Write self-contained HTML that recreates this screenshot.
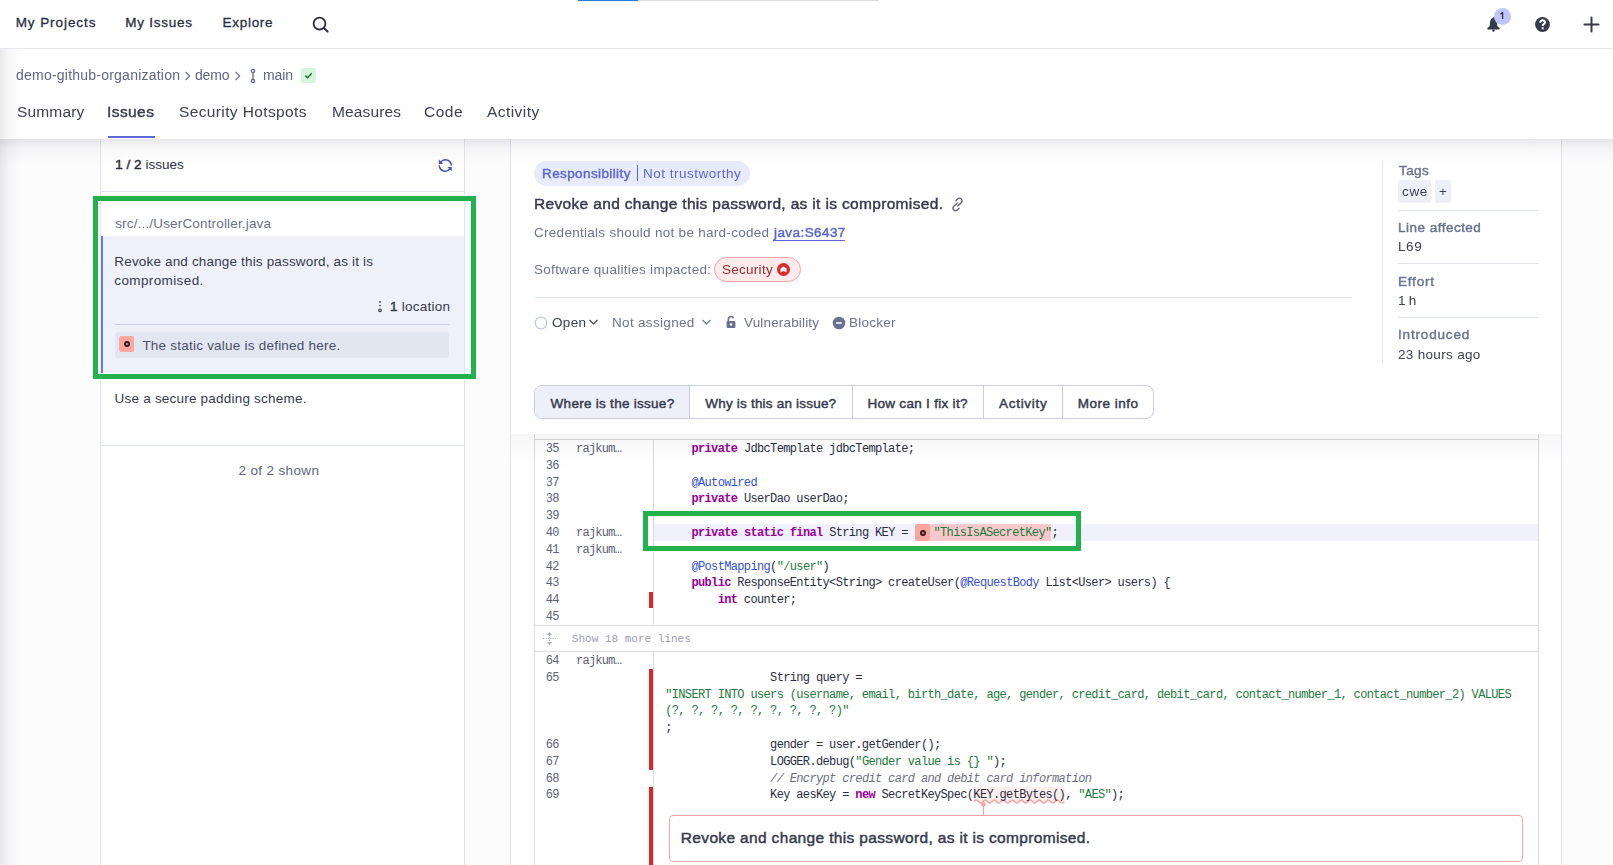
<!DOCTYPE html><html><head><meta charset="utf-8"><style>

*{box-sizing:border-box;margin:0;padding:0}
html,body{width:1613px;height:865px;overflow:hidden;background:#fcfcfd;font-family:'Liberation Sans', sans-serif}
.a{position:absolute;white-space:pre}
.r{position:absolute}
.cl{position:absolute;white-space:pre;font-family:'Liberation Mono', monospace;font-size:12px;line-height:12px;letter-spacing:-0.645px;color:#2a2e3f}
.ln{left:530px;width:28.86px;text-align:right;color:#5b6277}
.au{left:576px;color:#5b6277;letter-spacing:-0.745px}
.cd{left:665.2px}
b{font-weight:400;-webkit-text-stroke-width:0.45px}
.cl b{font-weight:700;-webkit-text-stroke-width:0}

</style></head><body>

<!-- top bar -->
<div class="r" style="left:0;top:0;width:1613px;height:49px;background:#fff;border-bottom:1px solid #e8e9ee"></div>
<div class="r" style="left:578px;top:0;width:60px;height:1px;background:#2f7ad8"></div>
<div class="r" style="left:638px;top:0;width:241px;height:1px;background:#dcdcdc"></div>
<svg class="r" style="left:311px;top:15px" width="20" height="20" viewBox="0 0 20 20"><circle cx="8.5" cy="8.6" r="5.9" fill="none" stroke="#2a2e3f" stroke-width="1.8"/><path d="M12.8 13 L16.6 16.6" stroke="#2a2e3f" stroke-width="2" stroke-linecap="round"/></svg>
<!-- bell -->
<svg class="r" style="left:1486px;top:16px" width="16" height="17" viewBox="0 0 16 17"><path d="M7.5 1.2 C5.3 1.9 4.2 3.9 4 6.6 L3.6 10.2 L1.4 12 Q0.9 13.5 2.3 13.5 H12.7 Q14.1 13.5 13.6 12 L11.4 10.2 L11 6.6 C10.8 3.9 9.7 1.9 7.5 1.2 Z" fill="#363a4b"/><path d="M6.1 13.6 H8.9 L8.3 15.7 H6.7 Z" fill="#363a4b"/></svg>
<div class="r" style="left:1494px;top:8px;width:17px;height:17px;border-radius:50%;background:#c0c6fb"></div>
<svg class="r" style="left:1494px;top:8px" width="17" height="17" viewBox="0 0 17 17"><path d="M6.3 6.2 L8.6 4.4 V11" fill="none" stroke="#3a2e3a" stroke-width="1.3" stroke-linejoin="round"/></svg>
<!-- help -->
<svg class="r" style="left:1535px;top:17px" width="15" height="15" viewBox="0 0 15 15"><circle cx="7.5" cy="7.5" r="7.4" fill="#363a4b"/><path d="M5.2 5.7 C5.2 4.1 6.2 3.3 7.6 3.3 C9 3.3 9.9 4.2 9.9 5.4 C9.9 7 7.7 7.1 7.7 9" fill="none" stroke="#fff" stroke-width="2" stroke-linecap="butt"/><rect x="6.7" y="10.3" width="2" height="1.9" fill="#fff"/></svg>
<!-- plus -->
<svg class="r" style="left:1583px;top:16px" width="17" height="17" viewBox="0 0 17 17"><path d="M8.5 1.5 V15.5 M1.5 8.5 H15.5" stroke="#363a4b" stroke-width="2" stroke-linecap="round"/></svg>

<!-- sub header shadow + body -->
<div class="r" style="left:0;top:49px;width:1613px;height:90px;background:#fff;z-index:5"></div>
<div class="r" style="left:0;top:139px;width:1613px;height:26px;background:linear-gradient(rgba(20,20,40,0.095),rgba(20,20,40,0.03) 40%,rgba(20,20,40,0));z-index:5"></div>


<div class="r" style="left:108px;top:136px;width:47px;height:2px;background:#5f6bd3;z-index:6"></div>
<svg class="r" style="left:183px;top:70px;z-index:6" width="10" height="12" viewBox="0 0 10 12"><path d="M2.5 1.8 L6.6 6 L2.5 10.2" fill="none" stroke="#5c6788" stroke-width="1.1"/></svg>
<svg class="r" style="left:232.5px;top:70px;z-index:6" width="10" height="12" viewBox="0 0 10 12"><path d="M2.5 1.8 L6.6 6 L2.5 10.2" fill="none" stroke="#5c6788" stroke-width="1.1"/></svg>
<svg class="r" style="left:249px;top:68px;z-index:6" width="8" height="16" viewBox="0 0 8 16"><circle cx="4" cy="3" r="1.6" fill="none" stroke="#5c6788" stroke-width="1.3"/><circle cx="4" cy="13" r="1.6" fill="none" stroke="#5c6788" stroke-width="1.3"/><path d="M4 4.6 V11.4" stroke="#5c6788" stroke-width="1.3"/></svg>
<div class="r" style="left:301px;top:68px;width:15px;height:15px;border-radius:2px;background:#d4f5dc;z-index:6"></div>
<svg class="r" style="left:301px;top:68px;z-index:6" width="15" height="15" viewBox="0 0 15 15"><path d="M4.3 7.6 L6.5 9.7 L10.7 5.3" fill="none" stroke="#1f6e38" stroke-width="1.5"/></svg>


<div class="r" style="left:100px;top:139px;width:365px;height:726px;background:#fff;border-left:1px solid #e1e5f0;border-right:1px solid #e1e5f0"></div>
<div class="r" style="left:101px;top:191px;width:363px;height:1px;background:#e1e5f0"></div>
<svg class="r" style="left:438px;top:158px" width="16" height="16" viewBox="0 0 16 16"><path d="M2.6 4.4 A5.9 5.9 0 0 1 13.3 7" fill="none" stroke="#4450c0" stroke-width="1.5" stroke-linecap="round"/><path d="M0.9 1.6 L0.9 6 L5.2 6Z" fill="#4450c0"/><path d="M1.3 7.9 A5.9 5.9 0 0 0 12 10.6" fill="none" stroke="#4450c0" stroke-width="1.5" stroke-linecap="round"/><path d="M13.7 8.9 L13.7 13.2 L9.4 8.9Z" fill="#4450c0"/></svg>
<div class="r" style="left:101px;top:236px;width:363px;height:137px;background:#eef1f9"></div>
<div class="r" style="left:101px;top:236px;width:2px;height:137px;background:#6f7bd8"></div>
<svg class="r" style="left:376.6px;top:300px" width="6" height="13" viewBox="0 0 6 13"><circle cx="3" cy="1.9" r="0.95" fill="#363b4d"/><circle cx="3" cy="5.6" r="0.85" fill="#363b4d"/><circle cx="3" cy="10.3" r="1.35" fill="none" stroke="#363b4d" stroke-width="1.15"/></svg>
<div class="r" style="left:115px;top:324px;width:334px;height:1px;background:#c9cfe2"></div>
<div class="r" style="left:115px;top:332px;width:334px;height:26px;border-radius:3px;background:#e1e6f1"></div>
<div class="r" style="left:119px;top:336px;width:15px;height:16px;border-radius:2px;background:#fca8a1"></div>
<div class="r" style="left:123.5px;top:341px;width:6px;height:6px;border-radius:50%;border:2px solid #3a1a1a;background:#f6a09a"></div>
<div class="r" style="left:101px;top:445px;width:363px;height:1px;background:#e1e5f0"></div>


<div class="r" style="left:510px;top:139px;width:1052px;height:726px;background:#fff;border-left:1px solid #e1e5f0;border-right:1px solid #e1e5f0"></div>
<div class="r" style="left:534px;top:161px;width:216px;height:25px;border-radius:13px;background:#e8ebfc"></div>
<div class="r" style="left:637px;top:165px;width:1px;height:16px;background:#5b67d6"></div>
<svg class="r" style="left:949.5px;top:197px" width="15" height="15" viewBox="0 0 15 15"><g transform="rotate(-45 7.5 7.5)" fill="none" stroke="#5c6788" stroke-width="1.35" stroke-linecap="round"><path d="M8.4 6.2 H3.6 A2.55 2.55 0 0 0 3.6 11.3 H6"/><path d="M6.6 8.8 H11.4 A2.55 2.55 0 0 0 11.4 3.7 H9"/></g></svg>
<div class="r" style="left:773px;top:239.5px;width:72px;height:1px;background:#5b67d6"></div>
<div class="r" style="left:714px;top:257px;width:87px;height:25px;border-radius:13px;background:#fdeaea;border:1px solid #f5a5a5"></div>
<svg class="r" style="left:777px;top:263px" width="13" height="13" viewBox="0 0 13 13"><circle cx="6.5" cy="6.5" r="6.5" fill="#d92b2b"/><path d="M3.7 5.4 L6.5 3.7 L9.3 5.4 V9.1 L6.5 8 L3.7 9.1 Z" fill="#fff" stroke="#fff" stroke-width="0.3" stroke-linejoin="round"/></svg>
<div class="r" style="left:534px;top:297px;width:818px;height:1px;background:#e1e6f3"></div>
<svg class="r" style="left:534px;top:316px" width="14" height="14" viewBox="0 0 14 14"><circle cx="7" cy="7" r="5.8" fill="none" stroke="#c3c9dd" stroke-width="1.3"/></svg>
<svg class="r" style="left:588px;top:318px" width="11" height="8" viewBox="0 0 11 8"><path d="M1.5 2 L5.5 6 L9.5 2" fill="none" stroke="#3b4054" stroke-width="1.2"/></svg>
<svg class="r" style="left:701px;top:318px" width="11" height="8" viewBox="0 0 11 8"><path d="M1.5 2 L5.5 6 L9.5 2" fill="none" stroke="#6b7390" stroke-width="1.2"/></svg>
<svg class="r" style="left:725px;top:315px" width="12" height="14" viewBox="0 0 12 14"><path d="M3.4 6 V4.2 A2.7 2.7 0 0 1 8.6 3.2" fill="none" stroke="#68718f" stroke-width="1.7"/><rect x="1.6" y="6" width="8.8" height="7" rx="1" fill="#68718f"/><circle cx="6" cy="9.5" r="1.2" fill="#fff"/></svg>
<svg class="r" style="left:831.5px;top:315.5px" width="14" height="14" viewBox="0 0 14 14"><circle cx="7" cy="7" r="6.3" fill="#68718f"/><rect x="4" y="6.2" width="6" height="1.6" rx="0.5" fill="#fff"/></svg>
<!-- sidebar -->
<div class="r" style="left:1382px;top:161px;width:1px;height:202px;background:#e1e5f0"></div>
<div class="r" style="left:1398px;top:180px;width:33px;height:23px;border-radius:2px;background:#eef0f8"></div>
<div class="r" style="left:1435px;top:180px;width:16px;height:23px;border-radius:2px;background:#eef0f8"></div>
<div class="r" style="left:1398px;top:210px;width:141px;height:1px;background:#e1e5f0"></div>
<div class="r" style="left:1398px;top:263px;width:141px;height:1px;background:#e1e5f0"></div>
<div class="r" style="left:1398px;top:317px;width:141px;height:1px;background:#e1e5f0"></div>
<!-- tabs -->
<div class="r" style="left:534px;top:385px;width:620px;height:34px;border-radius:8px;border:1px solid #c8cde0;overflow:hidden">
  <div class="r" style="left:0;top:0;width:154px;height:32px;background:#eef0f9"></div>
  <div class="r" style="left:154px;top:0;width:1px;height:32px;background:#c8cde0"></div>
  <div class="r" style="left:317px;top:0;width:1px;height:32px;background:#c8cde0"></div>
  <div class="r" style="left:448px;top:0;width:1px;height:32px;background:#c8cde0"></div>
  <div class="r" style="left:527px;top:0;width:1px;height:32px;background:#c8cde0"></div>
</div>
<!-- header shadow -->



<div class="r" style="left:534px;top:434px;width:1005px;height:431px;border:1px solid #dcdcdc;border-top:none;border-bottom:none;background:#fff"></div>

<div class="r" style="left:535px;top:439px;width:1003px;height:1px;background:#dcdcdc"></div>
<div class="r" style="left:653px;top:440px;width:1px;height:185px;background:#dcdcdc"></div>
<div class="r" style="left:653px;top:652px;width:1px;height:213px;background:#dcdcdc"></div>
<div class="r" style="left:654px;top:524px;width:884px;height:17px;background:#f0f1fc"></div>
<div class="r" style="left:535px;top:625px;width:1003px;height:1px;background:#dcdcdc"></div>
<div class="r" style="left:535px;top:651px;width:1003px;height:1px;background:#dcdcdc"></div>
<svg class="r" style="left:542px;top:631px" width="15" height="15" viewBox="0 0 15 15"><path d="M7.5 1 L5 4 H10Z M7.5 14 L5 11 H10Z" fill="#a5aab9"/><path d="M1 7.5 H14" stroke="#a5aab9" stroke-width="1" stroke-dasharray="1.2 1.2"/><path d="M7.5 4 V11" stroke="#a5aab9" stroke-width="1" stroke-dasharray="1.2 1.2"/></svg>
<div class="r" style="left:649px;top:592px;width:4px;height:16px;background:#d42a2a"></div>
<div class="r" style="left:649px;top:669px;width:4px;height:101px;background:#d42a2a"></div>
<div class="r" style="left:649px;top:786.5px;width:4px;height:80px;background:#d42a2a"></div>
<div class="r" style="left:915px;top:524px;width:15px;height:17px;border-radius:2px;background:#f9a59f"></div>
<div class="r" style="left:919.5px;top:529.5px;width:6px;height:6px;border-radius:50%;border:2px solid #3a1a1a;background:#f6a09a"></div>
<div class="r" style="left:930px;top:524px;width:121px;height:17px;background:#f8c9cc"></div>
<div class="r" style="left:974px;top:787px;width:91px;height:15px;background:#fdeeee"></div>
<svg class="r" style="left:973px;top:798px" width="93" height="19" viewBox="0 0 93 19"><path d="M1 3.5 Q3.25 0.5 5.50 3.5 Q7.75 6.5 10.00 3.5 Q12.25 0.5 14.50 3.5 Q16.75 6.5 19.00 3.5 Q21.25 0.5 23.50 3.5 Q25.75 6.5 28.00 3.5 Q30.25 0.5 32.50 3.5 Q34.75 6.5 37.00 3.5 Q39.25 0.5 41.50 3.5 Q43.75 6.5 46.00 3.5 Q48.25 0.5 50.50 3.5 Q52.75 6.5 55.00 3.5 Q57.25 0.5 59.50 3.5 Q61.75 6.5 64.00 3.5 Q66.25 0.5 68.50 3.5 Q70.75 6.5 73.00 3.5 Q75.25 0.5 77.50 3.5 Q79.75 6.5 82.00 3.5 Q84.25 0.5 86.50 3.5 Q88.75 6.5 91.00 3.5" fill="none" stroke="#f6a3a0" stroke-width="1.6"/><circle cx="10.5" cy="6.5" r="2.2" fill="#f6a3a0"/><path d="M10.5 6.5 V18" stroke="#f6a3a0" stroke-width="1.2"/></svg>
<div class="r" style="left:669px;top:815px;width:854px;height:47px;border-radius:4px;border:1px solid #f4a5a5;background:#fff"></div>

<div class="a" style="left:15.70px;top:16.00px;line-height:13.5px;color:#2a2e3f;font-family:'Liberation Sans', sans-serif;font-size:13.5px;font-weight:400;-webkit-text-stroke-width:0.3px;letter-spacing:0.92px;">My Projects</div>
<div class="a" style="left:125.20px;top:16.00px;line-height:13.5px;color:#2a2e3f;font-family:'Liberation Sans', sans-serif;font-size:13.5px;font-weight:400;-webkit-text-stroke-width:0.3px;letter-spacing:0.75px;">My Issues</div>
<div class="a" style="left:222.60px;top:16.00px;line-height:13.5px;color:#2a2e3f;font-family:'Liberation Sans', sans-serif;font-size:13.5px;font-weight:400;-webkit-text-stroke-width:0.3px;letter-spacing:0.7px;">Explore</div>
<div class="a" style="z-index:6;left:15.80px;top:68.00px;line-height:14px;color:#5c6788;will-change:transform;font-family:'Liberation Sans', sans-serif;font-size:14px;font-weight:400;letter-spacing:0.226px;">demo-github-organization</div>
<div class="a" style="z-index:6;left:194.50px;top:68.00px;line-height:14px;color:#5c6788;will-change:transform;font-family:'Liberation Sans', sans-serif;font-size:14px;font-weight:400;letter-spacing:-0.167px;">demo</div>
<div class="a" style="z-index:6;left:263.00px;top:68.00px;line-height:14px;color:#5c6788;will-change:transform;font-family:'Liberation Sans', sans-serif;font-size:14px;font-weight:400;letter-spacing:-0.133px;">main</div>
<div class="a" style="z-index:6;left:17.00px;top:103.80px;line-height:15.5px;color:#3b4054;will-change:transform;font-family:'Liberation Sans', sans-serif;font-size:15.5px;font-weight:400;letter-spacing:0.167px;">Summary</div>
<div class="a" style="z-index:6;left:107.40px;top:103.80px;line-height:15.5px;color:#3b4054;will-change:transform;font-family:'Liberation Sans', sans-serif;font-size:15.5px;font-weight:400;-webkit-text-stroke-width:0.45px;letter-spacing:0.42px;">Issues</div>
<div class="a" style="z-index:6;left:179.00px;top:103.80px;line-height:15.5px;color:#3b4054;will-change:transform;font-family:'Liberation Sans', sans-serif;font-size:15.5px;font-weight:400;letter-spacing:0.375px;">Security Hotspots</div>
<div class="a" style="z-index:6;left:331.50px;top:103.80px;line-height:15.5px;color:#3b4054;will-change:transform;font-family:'Liberation Sans', sans-serif;font-size:15.5px;font-weight:400;letter-spacing:0.143px;">Measures</div>
<div class="a" style="z-index:6;left:424.00px;top:103.80px;line-height:15.5px;color:#3b4054;will-change:transform;font-family:'Liberation Sans', sans-serif;font-size:15.5px;font-weight:400;letter-spacing:0.5px;">Code</div>
<div class="a" style="z-index:6;left:487.40px;top:103.80px;line-height:15.5px;color:#3b4054;will-change:transform;font-family:'Liberation Sans', sans-serif;font-size:15.5px;font-weight:400;letter-spacing:0.443px;">Activity</div>
<div class="a" style="left:115.20px;top:158.20px;line-height:13.5px;color:#2a2e3f;font-family:'Liberation Sans', sans-serif;font-size:13.5px;font-weight:400;letter-spacing:0.036px;"><b>1 / 2</b> issues</div>
<div class="a" style="left:115.20px;top:216.60px;line-height:13.5px;color:#69708a;font-family:'Liberation Sans', sans-serif;font-size:13.5px;font-weight:400;letter-spacing:0.165px;">src/.../UserController.java</div>
<div class="a" style="left:114.30px;top:254.80px;line-height:13.5px;color:#363b4d;font-family:'Liberation Sans', sans-serif;font-size:13.5px;font-weight:400;letter-spacing:0.163px;">Revoke and change this password, as it is</div>
<div class="a" style="left:114.30px;top:273.50px;line-height:13.5px;color:#363b4d;font-family:'Liberation Sans', sans-serif;font-size:13.5px;font-weight:400;letter-spacing:0.382px;">compromised.</div>
<div class="a" style="left:389.90px;top:300.10px;line-height:13.5px;color:#363b4d;font-family:'Liberation Sans', sans-serif;font-size:13.5px;font-weight:400;letter-spacing:0.256px;"><b>1</b> location</div>
<div class="a" style="left:142.40px;top:339.00px;line-height:13.5px;color:#4a5068;font-family:'Liberation Sans', sans-serif;font-size:13.5px;font-weight:400;letter-spacing:0.225px;">The static value is defined here.</div>
<div class="a" style="left:114.60px;top:391.90px;line-height:13.5px;color:#363b4d;font-family:'Liberation Sans', sans-serif;font-size:13.5px;font-weight:400;letter-spacing:0.211px;">Use a secure padding scheme.</div>
<div class="a" style="left:238.50px;top:463.70px;line-height:13.5px;color:#5e6580;font-family:'Liberation Sans', sans-serif;font-size:13.5px;font-weight:400;letter-spacing:0.355px;">2 of 2 shown</div>
<div class="a" style="left:541.70px;top:167.20px;line-height:13.5px;color:#5b67d6;will-change:transform;font-family:'Liberation Sans', sans-serif;font-size:13.5px;font-weight:400;-webkit-text-stroke-width:0.45px;letter-spacing:0.392px;">Responsibility</div>
<div class="a" style="left:642.70px;top:167.20px;line-height:13.5px;color:#5b67d6;will-change:transform;font-family:'Liberation Sans', sans-serif;font-size:13.5px;font-weight:400;letter-spacing:0.507px;">Not trustworthy</div>
<div class="a" style="left:533.60px;top:195.70px;line-height:15.5px;color:#363a4d;will-change:transform;font-family:'Liberation Sans', sans-serif;font-size:15.5px;font-weight:400;-webkit-text-stroke-width:0.45px;letter-spacing:0.336px;">Revoke and change this password, as it is compromised.</div>
<div class="a" style="left:533.60px;top:226.10px;line-height:13.5px;color:#6b7390;will-change:transform;font-family:'Liberation Sans', sans-serif;font-size:13.5px;font-weight:400;letter-spacing:0.283px;">Credentials should not be hard-coded</div>
<div class="a" style="left:774.00px;top:226.10px;line-height:13.5px;color:#5b67d6;will-change:transform;font-family:'Liberation Sans', sans-serif;font-size:13.5px;font-weight:400;-webkit-text-stroke-width:0.45px;letter-spacing:0.422px;">java:S6437</div>
<div class="a" style="left:533.50px;top:262.80px;line-height:13.5px;color:#6b7390;will-change:transform;font-family:'Liberation Sans', sans-serif;font-size:13.5px;font-weight:400;letter-spacing:0.304px;">Software qualities impacted:</div>
<div class="a" style="left:721.90px;top:262.80px;line-height:13.5px;color:#912f2f;will-change:transform;font-family:'Liberation Sans', sans-serif;font-size:13.5px;font-weight:400;letter-spacing:0.271px;">Security</div>
<div class="a" style="left:552.30px;top:315.80px;line-height:13.5px;color:#3b4054;will-change:transform;font-family:'Liberation Sans', sans-serif;font-size:13.5px;font-weight:400;letter-spacing:0.367px;">Open</div>
<div class="a" style="left:611.80px;top:315.80px;line-height:13.5px;color:#6b7390;will-change:transform;font-family:'Liberation Sans', sans-serif;font-size:13.5px;font-weight:400;letter-spacing:0.318px;">Not assigned</div>
<div class="a" style="left:743.50px;top:315.80px;line-height:13.5px;color:#6b7390;will-change:transform;font-family:'Liberation Sans', sans-serif;font-size:13.5px;font-weight:400;letter-spacing:0.167px;">Vulnerability</div>
<div class="a" style="left:848.70px;top:315.80px;line-height:13.5px;color:#6b7390;will-change:transform;font-family:'Liberation Sans', sans-serif;font-size:13.5px;font-weight:400;letter-spacing:0.25px;">Blocker</div>
<div class="a" style="left:1399.00px;top:164.00px;line-height:13.5px;color:#6b7593;will-change:transform;font-family:'Liberation Sans', sans-serif;font-size:13.5px;font-weight:400;-webkit-text-stroke-width:0.45px;letter-spacing:0.4px;">Tags</div>
<div class="a" style="left:1401.50px;top:184.80px;line-height:13.5px;color:#3b4054;will-change:transform;font-family:'Liberation Sans', sans-serif;font-size:13.5px;font-weight:400;letter-spacing:0.65px;">cwe</div>
<div class="a" style="left:1438.50px;top:184.80px;line-height:13.5px;color:#3b4054;will-change:transform;font-family:'Liberation Sans', sans-serif;font-size:13.5px;font-weight:400;letter-spacing:1.5px;">+</div>
<div class="a" style="left:1398.00px;top:220.70px;line-height:13.5px;color:#6b7593;will-change:transform;font-family:'Liberation Sans', sans-serif;font-size:13.5px;font-weight:400;-webkit-text-stroke-width:0.45px;letter-spacing:0.483px;">Line affected</div>
<div class="a" style="left:1398.00px;top:239.80px;line-height:13.5px;color:#3b4054;will-change:transform;font-family:'Liberation Sans', sans-serif;font-size:13.5px;font-weight:400;letter-spacing:0.6px;">L69</div>
<div class="a" style="left:1398.00px;top:274.50px;line-height:13.5px;color:#6b7593;will-change:transform;font-family:'Liberation Sans', sans-serif;font-size:13.5px;font-weight:400;-webkit-text-stroke-width:0.45px;letter-spacing:0.8px;">Effort</div>
<div class="a" style="left:1398.00px;top:294.00px;line-height:13.5px;color:#3b4054;will-change:transform;font-family:'Liberation Sans', sans-serif;font-size:13.5px;font-weight:400;letter-spacing:-0.25px;">1 h</div>
<div class="a" style="left:1398.00px;top:328.30px;line-height:13.5px;color:#6b7593;will-change:transform;font-family:'Liberation Sans', sans-serif;font-size:13.5px;font-weight:400;-webkit-text-stroke-width:0.45px;letter-spacing:0.833px;">Introduced</div>
<div class="a" style="left:1398.00px;top:347.50px;line-height:13.5px;color:#3b4054;will-change:transform;font-family:'Liberation Sans', sans-serif;font-size:13.5px;font-weight:400;letter-spacing:0.318px;">23 hours ago</div>
<div class="a" style="left:550.60px;top:396.90px;line-height:13.5px;color:#363a4d;font-family:'Liberation Sans', sans-serif;font-size:13.5px;font-weight:400;-webkit-text-stroke-width:0.45px;letter-spacing:0.278px;">Where is the issue?</div>
<div class="a" style="left:705.30px;top:396.90px;line-height:13.5px;color:#363a4d;font-family:'Liberation Sans', sans-serif;font-size:13.5px;font-weight:400;-webkit-text-stroke-width:0.45px;letter-spacing:0.2px;">Why is this an issue?</div>
<div class="a" style="left:867.40px;top:396.90px;line-height:13.5px;color:#363a4d;font-family:'Liberation Sans', sans-serif;font-size:13.5px;font-weight:400;-webkit-text-stroke-width:0.45px;letter-spacing:0.3px;">How can I fix it?</div>
<div class="a" style="left:999.00px;top:396.90px;line-height:13.5px;color:#363a4d;font-family:'Liberation Sans', sans-serif;font-size:13.5px;font-weight:400;-webkit-text-stroke-width:0.45px;letter-spacing:0.714px;">Activity</div>
<div class="a" style="left:1077.80px;top:396.90px;line-height:13.5px;color:#363a4d;font-family:'Liberation Sans', sans-serif;font-size:13.5px;font-weight:400;-webkit-text-stroke-width:0.45px;letter-spacing:0.488px;">More info</div>
<div class="a" style="left:571.80px;top:633.50px;line-height:11px;color:#9aa0b4;font-family:'Liberation Mono', monospace;font-size:11px;font-weight:400;letter-spacing:0.012px;">Show 18 more lines</div>
<div class="a" style="left:680.80px;top:829.50px;line-height:15.5px;color:#363a4d;font-family:'Liberation Sans', sans-serif;font-size:15.5px;font-weight:400;-webkit-text-stroke-width:0.45px;letter-spacing:0.343px;">Revoke and change this password, as it is compromised.</div>
<div class="cl ln" style="top:443.00px;">35</div>
<div class="cl au" style="top:443.00px;">rajkum…</div>
<div class="cl cd" style="top:443.00px;">    <b style="color:#990099">private</b> JdbcTemplate jdbcTemplate;</div>
<div class="cl ln" style="top:459.80px;">36</div>
<div class="cl ln" style="top:476.60px;">37</div>
<div class="cl cd" style="top:476.60px;">    <span style="color:#3550d8">@Autowired</span></div>
<div class="cl ln" style="top:493.40px;">38</div>
<div class="cl cd" style="top:493.40px;">    <b style="color:#990099">private</b> UserDao userDao;</div>
<div class="cl ln" style="top:510.20px;">39</div>
<div class="cl ln" style="top:527.00px;">40</div>
<div class="cl au" style="top:527.00px;">rajkum…</div>
<div class="cl cd" style="top:527.00px;">    <b style="color:#990099">private</b> <b style="color:#990099">static</b> <b style="color:#990099">final</b> String KEY = </div>
<div class="cl ln" style="top:543.80px;">41</div>
<div class="cl au" style="top:543.80px;">rajkum…</div>
<div class="cl ln" style="top:560.60px;">42</div>
<div class="cl cd" style="top:560.60px;">    <span style="color:#3550d8">@PostMapping</span>(<span style="color:#1d7a3c">&quot;/user&quot;</span>)</div>
<div class="cl ln" style="top:577.40px;">43</div>
<div class="cl cd" style="top:577.40px;">    <b style="color:#990099">public</b> ResponseEntity&lt;String&gt; createUser(<span style="color:#3550d8">@RequestBody</span> List&lt;User&gt; users) {</div>
<div class="cl ln" style="top:594.20px;">44</div>
<div class="cl cd" style="top:594.20px;">        <b style="color:#990099">int</b> counter;</div>
<div class="cl ln" style="top:611.00px;">45</div>
<div class="cl ln" style="top:655.00px;">64</div>
<div class="cl au" style="top:655.00px;">rajkum…</div>
<div class="cl ln" style="top:671.80px;">65</div>
<div class="cl cd" style="top:671.80px;">                String query =</div>
<div class="cl cd" style="top:688.60px;"><span style="color:#1d7a3c">&quot;INSERT INTO users (username, email, birth_date, age, gender, credit_card, debit_card, contact_number_1, contact_number_2) VALUES</span></div>
<div class="cl cd" style="top:705.40px;"><span style="color:#1d7a3c">(?, ?, ?, ?, ?, ?, ?, ?, ?)&quot;</span></div>
<div class="cl cd" style="top:722.20px;">;</div>
<div class="cl ln" style="top:739.00px;">66</div>
<div class="cl cd" style="top:739.00px;">                gender = user.getGender();</div>
<div class="cl ln" style="top:755.80px;">67</div>
<div class="cl cd" style="top:755.80px;">                LOGGER.debug(<span style="color:#1d7a3c">&quot;Gender value is {} &quot;</span>);</div>
<div class="cl ln" style="top:772.60px;">68</div>
<div class="cl cd" style="top:772.60px;">                <i style="color:#6b7080">// Encrypt credit card and debit card information</i></div>
<div class="cl ln" style="top:789.40px;">69</div>
<div class="cl cd" style="top:789.40px;">                Key aesKey = <b style="color:#990099">new</b> SecretKeySpec(<span class="kh">KEY.getBytes()</span>, <span style="color:#1d7a3c">&quot;AES&quot;</span>);</div>
<div class="cl" style="left:933.5px;top:527.00px;z-index:3"><span style="color:#1d7a3c">&quot;ThisIsASecretKey&quot;</span>;</div>
<div class="r" style="left:0;top:49px;width:22px;height:816px;background:linear-gradient(to right,rgba(10,10,40,0.085),rgba(10,10,40,0.03) 40%,rgba(10,10,40,0));z-index:7"></div>
<div class="r" style="left:511px;top:434px;width:1050px;height:36px;background:linear-gradient(rgba(10,10,30,0.04),rgba(10,10,30,0.015) 40%,rgba(10,10,30,0))"></div>

<div class="r" style="left:92px;top:195px;width:385px;height:185px;border:1px solid #fff;z-index:20"></div>
<div class="r" style="left:93px;top:196px;width:383px;height:183px;border:5px solid #22b14c;z-index:21"></div>
<div class="r" style="left:642px;top:510px;width:440px;height:42px;border:1px solid #fff;z-index:20"></div>
<div class="r" style="left:643px;top:511px;width:438px;height:40px;border:5px solid #22b14c;z-index:21"></div>

</body></html>
